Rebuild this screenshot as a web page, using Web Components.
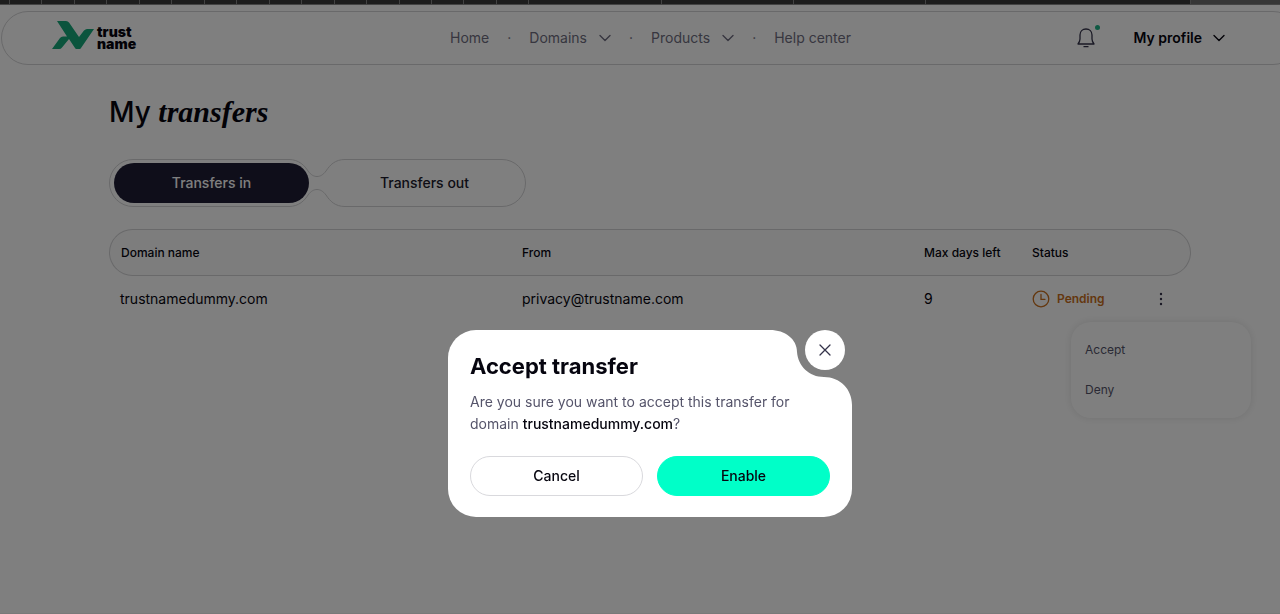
<!DOCTYPE html>
<html lang="en">
<head>
<meta charset="utf-8">
<title>My transfers</title>
<style>
  html { background: #fff; }
  body { margin: 0; min-height: 100vh; overflow: hidden; font-family: Inter, "Open Sans", sans-serif; font-size: 14px; line-height: 20px; color: #06050f; }
</style>
</head>
<body>
<transfers-page></transfers-page>
<script>
const define = (name, html, setup) => customElements.define(name, class extends HTMLElement {
  constructor() {
    super();
    const template = document.createElement('template');
    template.innerHTML = html;
    this.attachShadow({ mode: 'open' }).append(template.content.cloneNode(true));
  }
  connectedCallback() { if (setup) setup(this, this.shadowRoot); }
});

define('tab-strip', `
<style>
  :host { display: grid; grid-template-columns: 20fr repeat(16, 65fr) repeat(5, 265fr) 178fr; height: 4px; background: #3a3a3a; border-bottom: 1px solid #888; }
  i { border-right: 1px solid #858585; }
  i:nth-child(22) { border: 0; }
  i:last-child { border: 0; background: #6c6c6c; }
</style>${'<i></i>'.repeat(23)}`);

define('chevron-icon', `
<style>:host { display: flex; } svg { fill: none; stroke: currentColor; stroke-width: 1.4; stroke-linecap: round; stroke-linejoin: round; }</style>
<svg width="12" height="8" viewBox="0 0 12 8" aria-hidden="true"><path d="M1 1.5 6 6.5 11 1.5"/></svg>`);

define('brand-logo', `
<style>
  :host { display: block; }
  a { display: flex; align-items: center; gap: 3px; color: #06050f; text-decoration: none; font-weight: 900; font-size: 14px; line-height: 12px; }
  svg { margin-bottom: 6px; }
  span { display: block; }
</style>
<a href="#"><svg width="42" height="28" viewBox="0 0 42 28" aria-hidden="true"><path fill="#16a87a" d="M5 0H14Q16 0 17 1.500L27 16 32 9.500Q33.500 8 35 8H42L29 27Q28 28.500 26 28Q24 28.500 23 27L17 18 10 26.500Q9 28 7 28H0L8 17Q9 15.500 11 15.500H15Z"/></svg>
<span>trust<br>name</span></a>`);

define('site-header', `
<style>
  :host { display: grid; grid-template-columns: 1fr auto 1fr; align-items: center; height: 52px; margin: 6px 0 0 1px; padding: 0 50px; border: 1px solid #d2d2d4; border-radius: 27px; }
  nav { display: flex; align-items: center; gap: 18px; color: #6e6d80; }
  a { color: inherit; text-decoration: none; display: flex; align-items: center; gap: 12px; }
  .end { display: flex; justify-content: flex-end; align-items: center; gap: 38px; padding-right: 24px; }
  button { border: 0; background: none; padding: 0; font: inherit; color: inherit; display: flex; align-items: center; }
  .profile { gap: 11px; font-weight: 600; }
  .bell { position: relative; color: #34334a; }
  .bell::after { content: ""; position: absolute; right: -4px; top: -2px; width: 5px; height: 5px; border-radius: 50%; background: #1fb387; }
</style>
<brand-logo></brand-logo>
<nav aria-label="Main"><a href="#">Home</a><span>·</span><a href="#">Domains <chevron-icon></chevron-icon></a><span>·</span><a href="#">Products <chevron-icon></chevron-icon></a><span>·</span><a href="#">Help center</a></nav>
<div class="end">
  <button class="bell" aria-label="Notifications"><svg width="20" height="22" viewBox="0 0 20 22" fill="none" stroke="currentColor" stroke-width="1.300" stroke-linejoin="round" aria-hidden="true"><path d="M2 17H18C16.500 15 16 14 16 12V8C16 4.500 13.500 2 10 2S4 4.500 4 8V12C4 14 3.500 15 2 17Z"/><path d="M8 19.700H12" stroke-linecap="round"/></svg></button>
  <button class="profile">My profile <chevron-icon></chevron-icon></button>
</div>`);

define('segment-tabs', `
<style>
  :host { display: grid; grid-template-columns: 1fr 1fr; gap: 18px; position: relative; width: 417px; max-width: 100%; height: 48px; box-sizing: border-box; padding: 4px 4px 4px 5px; }
  svg { position: absolute; inset: 0; width: 100%; fill: none; stroke: #d2d2d4; }
  button { position: relative; border: 0; border-radius: 20px; background: none; font: inherit; font-weight: 500; color: #1c1b2c; }
  button[aria-selected=true] { background: #1f1d35; color: #fff; }
</style>
<svg height="48" viewBox="0 0 417 48" aria-hidden="true"><path d="M24 .5H180C190 .5 196 7 199 12C202 16 205 17.500 208 17.500S214 16 217 12C221 6 226 .5 236 .5H393A23.500 23.500 0 0 1 393 47.500H236C226 47.500 221 42 217 36C214 32 211 30.500 208 30.500S202 32 199 36C196 41 190 47.500 180 47.500H24A23.500 23.500 0 0 1 24 .5Z"/></svg>
<button role="tab" aria-selected="true">Transfers in</button><button role="tab" aria-selected="false">Transfers out</button>`,
(host) => host.setAttribute('role', 'tablist'));

define('action-menu', `
<style>
  :host { display: block; position: relative; }
  button { border: 0; background: none; font: inherit; color: #34334a; padding: 0; }
  .dots { display: flex; margin: 0 auto; padding: 4px; }
  .list { position: absolute; top: 34px; right: -60px; width: 180px; box-sizing: border-box; padding: 8px 14px; border-radius: 20px; background: #fff; box-shadow: 0 0 8px #0000001c; }
  .list button { display: block; width: 100%; height: 40px; text-align: left; font-size: 12px; color: #55546a; }
</style>
<button class="dots" aria-label="Actions"><svg width="4" height="14" viewBox="0 0 4 14" fill="currentColor" aria-hidden="true"><circle cx="2" cy="2" r="1.200"/><circle cx="2" cy="7" r="1.200"/><circle cx="2" cy="12" r="1.200"/></svg></button>
<div class="list"><button>Accept</button><button>Deny</button></div>`);

define('status-badge', `
<style>
  :host { display: flex; align-items: center; gap: 7px; color: #c96f1c; font-size: 12px; font-weight: 600; }
</style>
<svg width="18" height="18" viewBox="0 0 18 18" fill="none" stroke="currentColor" stroke-width="1.300" stroke-linecap="round" aria-hidden="true"><circle cx="9" cy="9" r="7.800"/><path d="M9 4.500V9.300H13"/></svg><slot></slot>`);

define('transfers-table', `
<style>
  :host { display: block; }
  table { width: 100%; table-layout: fixed; border-collapse: separate; border-spacing: 0; }
  th, td { text-align: left; padding: 0 0 0 11px; }
  th { height: 45px; font-size: 12px; font-weight: 500; background: #fbfbfb; border: solid #d2d2d4; border-width: 1px 0; }
  th:first-child { border-left-width: 1px; border-radius: 24px 0 0 24px; }
  th:last-child { border-right-width: 1px; border-radius: 0 24px 24px 0; }
  td { height: 46px; }
  td:last-child { padding: 0; }
  .days { width: 108px; } .status { width: 110px; } .act { width: 60px; }
</style>
<table>
  <colgroup><col><col><col class="days"><col class="status"><col class="act"></colgroup>
  <thead><tr><th>Domain name</th><th>From</th><th>Max days left</th><th>Status</th><th></th></tr></thead>
  <tbody><tr><td>trustnamedummy.com</td><td>privacy@trustname.com</td><td>9</td><td><status-badge>Pending</status-badge></td><td><action-menu></action-menu></td></tr></tbody>
</table>`);

define('confirm-dialog', `
<style>
  :host { display: block; position: relative; width: 404px; max-width: 90%; box-sizing: border-box; padding: 22px 22px 21px; border-radius: 28px 0 28px 28px;
    background: linear-gradient(#fff, #fff) left / calc(100% - 81px) 100% no-repeat, linear-gradient(#fff, #fff) right bottom / 100% calc(100% - 81px) no-repeat; }
  .corner { position: absolute; top: 0; right: 0; }
  .close { position: absolute; top: 0; right: 7px; width: 40px; height: 40px; border-radius: 50%; background: #fff; color: #34334a; display: grid; place-items: center; padding: 0; border: 0; }
  h2 { position: relative; margin: 0 0 11px; font-size: 22px; line-height: 28px; font-weight: 700; }
  p { position: relative; margin: 0 0 21px; line-height: 22px; color: #55546a; }
  ::slotted(b) { font-weight: 500; color: #06050f; }
  .row { position: relative; display: grid; grid-template-columns: 1fr 1fr; gap: 14px; }
  .row button { height: 40px; border: 1px solid #d9d9dd; border-radius: 20px; background: #fff; font: inherit; font-weight: 500; color: #06050f; }
  .row .go { background: #00ffc8; border-color: #00ffc8; }
</style>
<svg class="corner" width="82" height="82" viewBox="0 0 82 82" aria-hidden="true"><path fill="#fff" d="M0 0C15 0 27 9 27 22C28 36 39 47 54 47C70 47 82 59 82 75V82H0Z"/></svg>
<button class="close" aria-label="Close"><svg width="12" height="12" viewBox="0 0 12 12" stroke="currentColor" stroke-width="1.300" stroke-linecap="round" aria-hidden="true"><path d="M1 1 11 11M11 1 1 11"/></svg></button>
<h2><slot name="title"></slot></h2>
<p><slot></slot></p>
<div class="row"><button>Cancel</button><button class="go">Enable</button></div>`,
(host) => { host.setAttribute('role', 'dialog'); host.setAttribute('aria-label', 'Accept transfer'); });

define('modal-overlay', `
<style>
  :host { position: fixed; inset: 0; background: #00000080; border-bottom: 1px solid #0000000c; }
  .frame { display: flex; justify-content: center; width: calc(100% + 20px); padding-top: 330px; }
</style>
<div class="frame"><slot></slot></div>`);

define('transfers-page', `
<style>
  :host { display: block; }
  .page { width: calc(100% + 20px); }
  main { padding: 30px 109px; }
  h1 { margin: 0 0 30px; font-size: 28px; line-height: 34px; font-weight: 500; }
  em { font-family: "Liberation Serif", serif; font-size: 30px; font-weight: 700; }
  segment-tabs { margin-bottom: 22px; }
</style>
<tab-strip></tab-strip>
<div class="page"><site-header></site-header>
<main><h1>My <em>transfers</em></h1><segment-tabs></segment-tabs><transfers-table></transfers-table></main></div>
<modal-overlay><confirm-dialog><span slot="title">Accept transfer</span>Are you sure you want to accept this transfer for domain <b>trustnamedummy.com</b>?</confirm-dialog></modal-overlay>`);
</script>
</body>
</html>
